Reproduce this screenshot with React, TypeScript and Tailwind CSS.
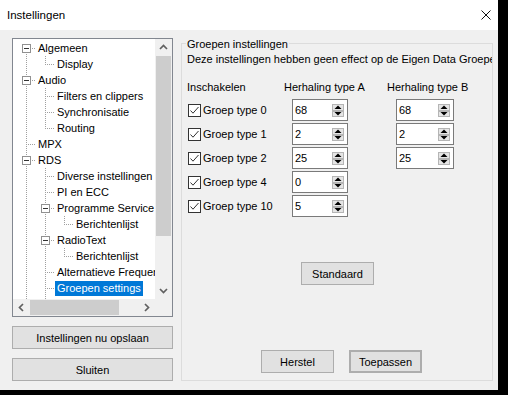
import React from "react";

type Row = {
  text: string;
  level: number;
  guides: boolean[];
  conn: "first" | "mid" | "last";
  exp?: boolean;
  sel?: boolean;
};

const rows: Row[] = [
  { text: "Algemeen", level: 0, guides: [], conn: "first", exp: true },
  { text: "Display", level: 1, guides: [true], conn: "last" },
  { text: "Audio", level: 0, guides: [], conn: "mid", exp: true },
  { text: "Filters en clippers", level: 1, guides: [true], conn: "mid" },
  { text: "Synchronisatie", level: 1, guides: [true], conn: "mid" },
  { text: "Routing", level: 1, guides: [true], conn: "last" },
  { text: "MPX", level: 0, guides: [], conn: "mid" },
  { text: "RDS", level: 0, guides: [], conn: "mid", exp: true },
  { text: "Diverse instellingen", level: 1, guides: [true], conn: "mid" },
  { text: "PI en ECC", level: 1, guides: [true], conn: "mid" },
  { text: "Programme Service", level: 1, guides: [true], conn: "mid", exp: true },
  { text: "Berichtenlijst", level: 2, guides: [true, true], conn: "last" },
  { text: "RadioText", level: 1, guides: [true], conn: "mid", exp: true },
  { text: "Berichtenlijst", level: 2, guides: [true, true], conn: "last" },
  { text: "Alternatieve Frequenties", level: 1, guides: [true], conn: "mid" },
  { text: "Groepen settings", level: 1, guides: [true], conn: "mid", sel: true },
  { text: "", level: 1, guides: [true], conn: "mid" },
];

const DOT = { stroke: "#a0a0a0", strokeWidth: 1, strokeDasharray: "1 1", shapeRendering: "crispEdges" as const };

function Guide({ on }: { on: boolean }) {
  return (
    <svg width="19" height="16" className="shrink-0 block">
      {on && <line x1="10.5" y1="0" x2="10.5" y2="16" {...DOT} />}
    </svg>
  );
}

function Connector({ conn, exp }: { conn: Row["conn"]; exp?: boolean }) {
  return (
    <svg width="19" height="16" className="shrink-0 block">
      {conn !== "first" && <line x1="10.5" y1="0" x2="10.5" y2="8" {...DOT} />}
      {conn !== "last" && <line x1="10.5" y1="8" x2="10.5" y2="16" {...DOT} />}
      <line x1="10" y1="8.5" x2="19" y2="8.5" {...DOT} />
      {exp && (
        <g shapeRendering="crispEdges">
          <rect x="6.5" y="4.5" width="8" height="8" fill="#fff" stroke="#919191" />
          <line x1="8" y1="8.5" x2="13" y2="8.5" stroke="#333" />
        </g>
      )}
    </svg>
  );
}

function TreeRow({ r }: { r: Row }) {
  return (
    <div className="flex h-[16px] items-center whitespace-nowrap">
      {r.guides.map((g, i) => (
        <Guide key={i} on={g} />
      ))}
      <Connector conn={r.conn} exp={r.exp} />
      <span
        className={
          "ml-px px-[2px] h-[15px] leading-[15px] " + (r.sel ? "bg-[#0078d7] text-white" : "")
        }
      >
        {r.text}
      </span>
    </div>
  );
}

function Chevron({ dir }: { dir: "up" | "down" | "left" | "right" }) {
  const pts =
    dir === "up"
      ? "5,10 8.5,6.5 12,10"
      : dir === "down"
      ? "5,7 8.5,10.5 12,7"
      : dir === "left"
      ? "10,5 6.5,8.5 10,12"
      : "7,5 10.5,8.5 7,12";
  return (
    <svg width="17" height="17" className="block shrink-0">
      <polyline points={pts} fill="none" stroke="#606060" strokeWidth="1.7" />
    </svg>
  );
}

function CheckBox() {
  return (
    <svg width="13" height="13" className="block shrink-0">
      <rect x="0.5" y="0.5" width="12" height="12" fill="#fff" stroke="#333" shapeRendering="crispEdges" />
      <polyline points="2.5,6.5 5,9.2 10.5,3" fill="none" stroke="#333" strokeWidth="1" />
    </svg>
  );
}

function SpinArrows() {
  return (
    <svg width="12" height="13" className="block shrink-0">
      <g shapeRendering="crispEdges">
        <rect x="0.5" y="0.5" width="11" height="5.5" fill="#e5e5e5" stroke="#b5b5b5" />
        <rect x="0.5" y="7" width="11" height="5.5" fill="#e5e5e5" stroke="#b5b5b5" />
      </g>
      <polygon points="2.5,5 9.5,5 6,1.6" fill="#000" />
      <polygon points="2.5,8 9.5,8 6,11.4" fill="#000" />
    </svg>
  );
}

function Spin({ value, w }: { value: string; w: string }) {
  return (
    <div className={"h-[22px] border border-[#7a7a7a] bg-white flex items-center pl-[2px] pr-[3px] " + w}>
      <span className="flex-1 leading-[16px]">{value}</span>
      <SpinArrows />
    </div>
  );
}

function Btn({ children, cls }: { children: React.ReactNode; cls?: string }) {
  return (
    <div
      className={
        "h-[23px] flex items-center justify-center bg-[#e1e1e1] border border-[#adadad] leading-[16px] " +
        (cls ?? "")
      }
    >
      {children}
    </div>
  );
}

const groups = [
  { t: "0", a: "68", b: "68" },
  { t: "1", a: "2", b: "2" },
  { t: "2", a: "25", b: "25" },
  { t: "4", a: "0" },
  { t: "10", a: "5" },
];

export default function App() {
  return (
    <div className="w-[508px] h-[395px] bg-black overflow-hidden font-['Liberation_Sans',Arial,sans-serif] text-[11px] leading-[16px] text-black">
      <div className="w-[498px] h-[390px] flex flex-col bg-[#f0f0f0]">
        <div className="h-[30px] shrink-0 bg-white flex items-center pl-[7px] pr-[7px]">
          <span className="text-[11.5px]">Instellingen</span>
          <svg width="10" height="10" className="ml-auto block">
            <line x1="0.5" y1="0.5" x2="9.5" y2="9.5" stroke="#111" strokeWidth="1" />
            <line x1="9.5" y1="0.5" x2="0.5" y2="9.5" stroke="#111" strokeWidth="1" />
          </svg>
        </div>
        <div className="flex-1 flex pl-[12px] pt-[8px]">
          {/* left column */}
          <div className="w-[161px] flex flex-col">
            <div className="h-[279px] border border-[#828790] bg-white flex flex-col">
              <div className="flex-1 flex min-h-0">
                <div className="w-[142px] overflow-hidden pt-px pl-[3px]">
                  {rows.map((r, i) => (
                    <TreeRow key={i} r={r} />
                  ))}
                </div>
                <div className="w-[17px] bg-[#f0f0f0] flex flex-col">
                  <Chevron dir="up" />
                  <div className="mx-px h-[180px] bg-[#cdcdcd]" />
                  <div className="flex-1" />
                  <Chevron dir="down" />
                </div>
              </div>
              <div className="h-[17px] flex shrink-0">
                <div className="w-[142px] bg-[#f0f0f0] flex">
                  <Chevron dir="left" />
                  <div className="my-px w-[89px] bg-[#cdcdcd]" />
                  <div className="flex-1" />
                  <Chevron dir="right" />
                </div>
                <div className="w-[17px] bg-[#f0f0f0]" />
              </div>
            </div>
            <Btn cls="mt-[9px]">Instellingen nu opslaan</Btn>
            <Btn cls="mt-[9px]">Sluiten</Btn>
          </div>

          {/* right group box */}
          <div className="relative ml-[8px] mt-[5px] w-[312px] h-[338px] border border-[#dcdcdc] flex flex-col pl-[5px]">
            <span className="absolute left-[4px] top-[-8px] bg-[#f0f0f0] px-px leading-[16px]">
              Groepen instellingen
            </span>
            <div className="mt-[7px] overflow-hidden whitespace-nowrap">
              Deze instellingen hebben geen effect op de Eigen Data Groepen
            </div>
            <div className="mt-[12px] grid grid-cols-[97px_103px_1fr] whitespace-nowrap">
              <span>Inschakelen</span>
              <span>Herhaling type A</span>
              <span>Herhaling type B</span>
            </div>
            <div className="mt-[4px] flex flex-col gap-[2px]">
              {groups.map((g) => (
                <div key={g.t} className="grid grid-cols-[97px_103px_1fr] h-[22px] items-center whitespace-nowrap">
                  <div className="flex items-center pl-px">
                    <CheckBox />
                    <span className="ml-[2px]">Groep type {g.t}</span>
                  </div>
                  <div className="pl-[8px]">
                    <Spin value={g.a} w="w-[56px]" />
                  </div>
                  <div className="pl-[9px]">{g.b && <Spin value={g.b} w="w-[58px]" />}</div>
                </div>
              ))}
            </div>
            <Btn cls="mt-[45px] ml-[114px] w-[73px]">Standaard</Btn>
            <div className="mt-[65px] ml-[74px] flex gap-[15px]">
              <Btn cls="w-[73px]">Herstel</Btn>
              <Btn cls="w-[73px] border-2 border-[#0078d7]">Toepassen</Btn>
            </div>
          </div>
        </div>
      </div>
    </div>
  );
}
